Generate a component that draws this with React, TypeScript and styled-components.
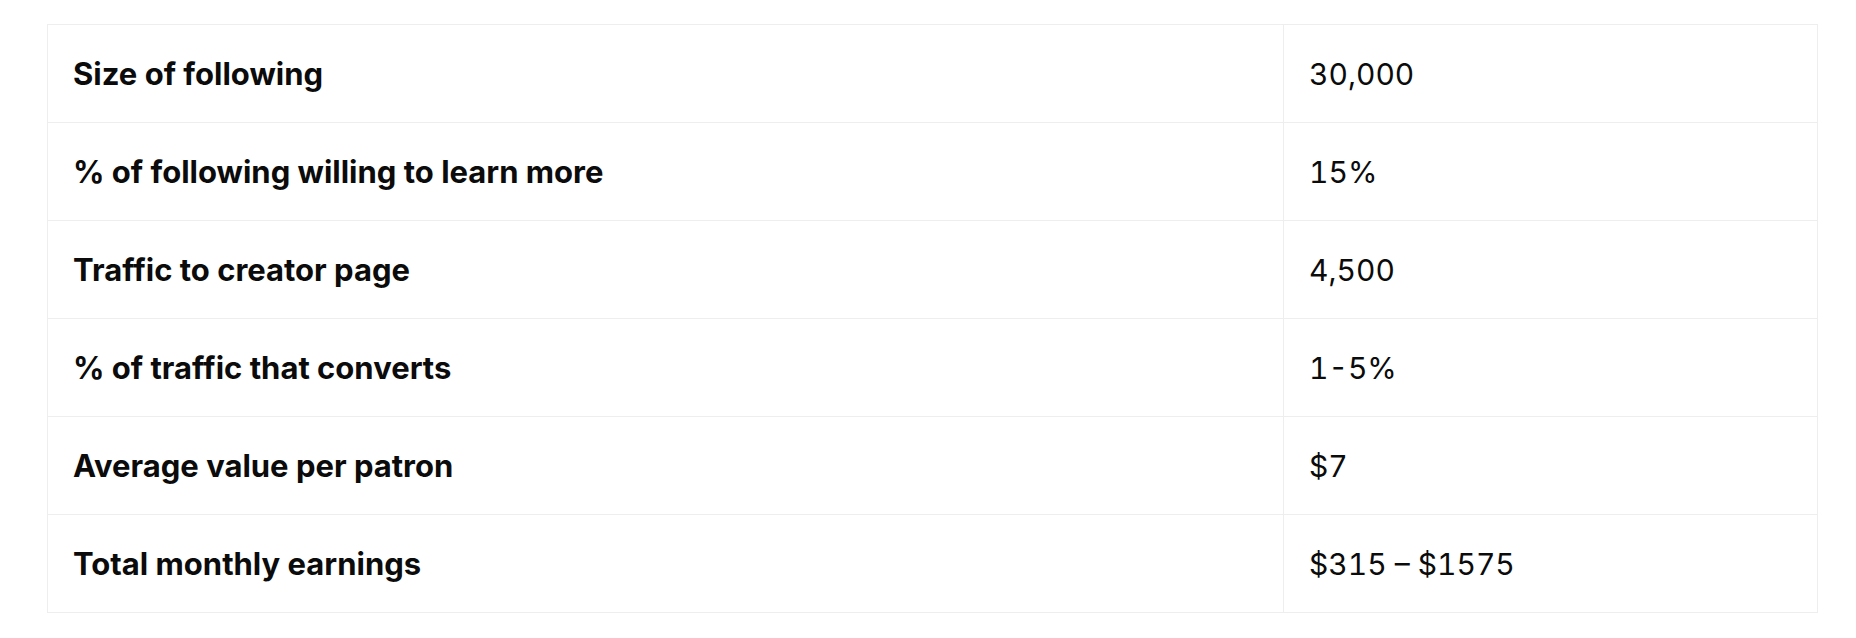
import React from "react";
import styled, { createGlobalStyle } from "styled-components";

const GlobalStyle = createGlobalStyle`
  html, body {
    margin: 0;
    padding: 0;
    background: #ffffff;
  }
  body {
    font-family: Inter, "Noto Sans", sans-serif;
    color: #000000;
  }
`;

const Page = styled.div`
  padding: 24px 40px 26px 47px;
`;

const Table = styled.table`
  width: 1770px;
  table-layout: fixed;
  border-collapse: collapse;
  border: 1px solid #eeeeee;
`;

const LabelCol = styled.col`
  width: 1236px;
`;

const ValueCol = styled.col`
  width: 534px;
`;

const Row = styled.tr`
  height: 98px;
`;

const Cell = styled.td<{ $label?: boolean }>`
  border: 1px solid #eeeeee;
  padding: 0 24px 0 25px;
  vertical-align: middle;
  font-family: Inter, "Noto Sans", sans-serif;
  font-size: ${(p) => (p.$label ? "31px" : "30px")};
  line-height: 40px;
  color: #0b0b0b;
  font-weight: ${(p) => (p.$label ? 700 : 400)};
  font-feature-settings: ${(p) => (p.$label ? "normal" : '"tnum" 1')};
  white-space: nowrap;
`;

const rows: [string, string][] = [
  ["Size of following", "30,000"],
  ["% of following willing to learn more", "15%"],
  ["Traffic to creator page", "4,500"],
  ["% of traffic that converts", "1-5%"],
  ["Average value per patron", "$7"],
  ["Total monthly earnings", "$315 \u2013 $1575"],
];

export default function App() {
  return (
    <>
      <GlobalStyle />
      <Page>
        <Table>
          <colgroup>
            <LabelCol />
            <ValueCol />
          </colgroup>
          <tbody>
            {rows.map(([label, value]) => (
              <Row key={label}>
                <Cell $label>{label}</Cell>
                <Cell>{value}</Cell>
              </Row>
            ))}
          </tbody>
        </Table>
      </Page>
    </>
  );
}
